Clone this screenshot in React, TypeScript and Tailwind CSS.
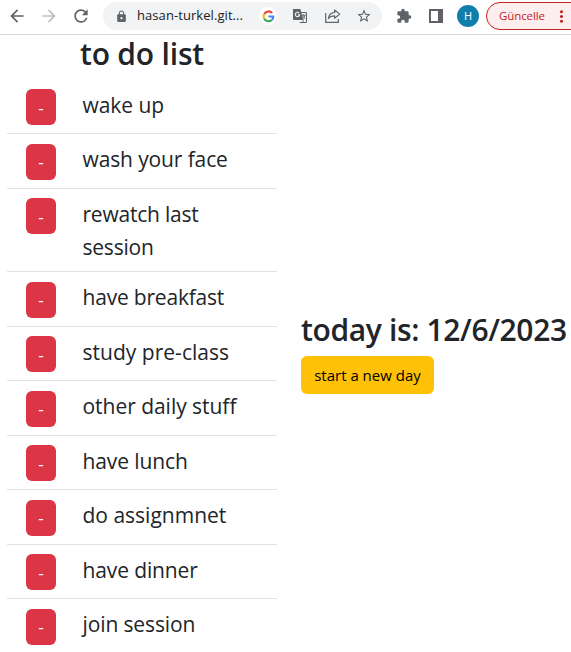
import { MdArrowBack, MdArrowForward, MdRefresh, MdLock, MdExtension, MdStarBorder, MdMoreVert } from "react-icons/md";

const tasks = [
  { text: "wake up", tracking: "tracking-[-0.05px]" },
  { text: "wash your face", tracking: "tracking-[-0.12px]" },
  { text: "rewatch last session", tracking: "tracking-[-0.22px]" },
  { text: "have breakfast", tracking: "tracking-[-0.2px]" },
  { text: "study pre-class", tracking: "tracking-[0.02px]" },
  { text: "other daily stuff", tracking: "tracking-[-0.03px]" },
  { text: "have lunch", tracking: "tracking-[-0.1px]" },
  { text: "do assignmnet", tracking: "tracking-[0px]" },
  { text: "have dinner", tracking: "tracking-[-0.12px]" },
  { text: "join session", tracking: "tracking-[-0.12px]" },
];

function GoogleIcon() {
  return (
    <svg width="13" height="13" viewBox="0 0 14 14" fill="none" strokeWidth="2.3">
      <path d="M11 3.2A5.2 5.2 0 0 0 2.4 4.6" stroke="#ea4335" />
      <path d="M2.4 4.6a5.2 5.2 0 0 0 0 4.8" stroke="#fbbc05" />
      <path d="M2.4 9.4a5.2 5.2 0 0 0 8.1 1.4" stroke="#34a853" />
      <path d="M10.5 10.8A5 5 0 0 0 12.1 7H7" stroke="#4285f4" />
    </svg>
  );
}

function TranslateIcon() {
  return (
    <svg width="14" height="14" viewBox="0 0 14 14" fill="none">
      <path d="M6 3.5h7.5v10H6.8" fill="#f1f3f4" stroke="#5f6368" />
      <path d="M0 0h7.4l3 11H1a1 1 0 0 1-1-1z" fill="#5f6368" />
      <path d="M6.2 4A2.2 2.2 0 1 0 6.7 5.7H4.7" stroke="#f1f3f4" strokeWidth="1.1" />
      <path d="M8.8 6.2h4M10.7 5.1v1.1M9.5 6.4c.6 1.6 1.5 2.4 2.8 3.4M12 6.4c-.4 1.6-1.1 2.5-2.2 3.5M9.6 13.3l1-2.2" stroke="#5f6368" strokeWidth=".9" />
    </svg>
  );
}

function ShareIcon() {
  return (
    <svg width="16" height="14" viewBox="0 0 16 14" fill="none" stroke="#5f6368" strokeWidth="1.2">
      <path d="M.7 4v9.3h12.6V10" />
      <path d="M9.6 1l5.1 4.1-5.1 4.1V6.8c-2.9 0-4.8.8-6.2 2.7.5-3.5 2.5-5.7 6.2-6.1z" strokeLinejoin="round" />
    </svg>
  );
}

function BrowserBar() {
  return (
    <header className="flex h-[35px] items-start border-b border-[#d9dbdd] bg-white text-[#5f6368]">
      <MdArrowBack className="mt-[6px] ml-[7px] size-5 shrink-0" />
      <MdArrowForward className="mt-[6px] ml-3 size-5 shrink-0 text-[#bdc1c6]" />
      <MdRefresh className="mt-[6px] ml-3 size-5 shrink-0" />
      <div className="mt-[2px] ml-[12px] flex h-7 w-[279px] shrink-0 items-center rounded-full bg-[#f1f3f4]">
        <MdLock className="ml-[12px] size-[13px] shrink-0" />
        <span className="ml-[9px] w-[107px] shrink-0 whitespace-nowrap text-[13px] tracking-[0.07px] text-[#202124]">hasan-turkel.git...</span>
        <span className="ml-[15px] flex size-[18px] shrink-0 items-center justify-center rounded-full bg-white">
          <GoogleIcon />
        </span>
        <span className="ml-[16px] shrink-0"><TranslateIcon /></span>
        <span className="ml-[18px] shrink-0"><ShareIcon /></span>
        <MdStarBorder className="ml-[15px] size-4 shrink-0" />
      </div>
      <MdExtension className="mt-2 ml-[14px] size-4 shrink-0" />
      <span className="mt-[9px] ml-[17px] h-[14px] w-[14px] shrink-0 border-2 border-r-[5px] border-[#5f6368]" />
      <span className="mt-[5px] ml-[14px] flex size-[22px] shrink-0 items-center justify-center rounded-full bg-[#117fab] text-[11px] text-white">H</span>
      <div className="mt-[2px] ml-[7px] flex h-7 w-[100px] shrink-0 items-center rounded-full border border-[#c5221f] bg-[#fceeee] text-[#c5221f]">
        <span className="ml-3 w-[47px] text-[11.5px] tracking-[-0.1px] whitespace-nowrap">Güncelle</span>
        <MdMoreVert className="ml-[6px] size-[19px] shrink-0" />
      </div>
    </header>
  );
}

export default function App() {
  return (
    <div className="h-[652px] w-[571px] overflow-hidden bg-white font-['Open_Sans','Noto_Sans',sans-serif] text-[#212529]">
      <BrowserBar />
      <main className="flex h-[617px]">
        <section className="ml-[7px] w-[270px] shrink-0">
          <h1 className="h-[44.5px] pl-[73px] text-[30px] leading-[38px] font-semibold tracking-[-0.2px]">to do list</h1>
          <ul>
            {tasks.map((task) => (
              <li key={task.text} className="flex min-h-[54.5px] items-start border-b border-[#dee2e6] pt-[9.5px] pb-[7px] pl-[19px] last:border-b-0">
                <button className="flex h-9 w-[30px] shrink-0 items-center justify-center rounded-md bg-[#dc3545] text-[17px] leading-none text-white">-</button>
                <span className={"-mt-[0.25px] mb-[0.25px] ml-[26.5px] w-[160px] text-[21px] leading-[33px] " + task.tracking}>{task.text}</span>
              </li>
            ))}
          </ul>
        </section>
        <section className="ml-6 w-[270px] shrink-0 pt-[276px]">
          <h2 className="text-[30px] leading-[38px] font-semibold whitespace-nowrap tracking-[-0.36px]">today is: 12/6/2023</h2>
          <button className="mt-[7px] h-[38px] w-[133px] rounded-md bg-[#ffc107] text-[15px] whitespace-nowrap text-black">start a new day</button>
        </section>
      </main>
    </div>
  );
}
